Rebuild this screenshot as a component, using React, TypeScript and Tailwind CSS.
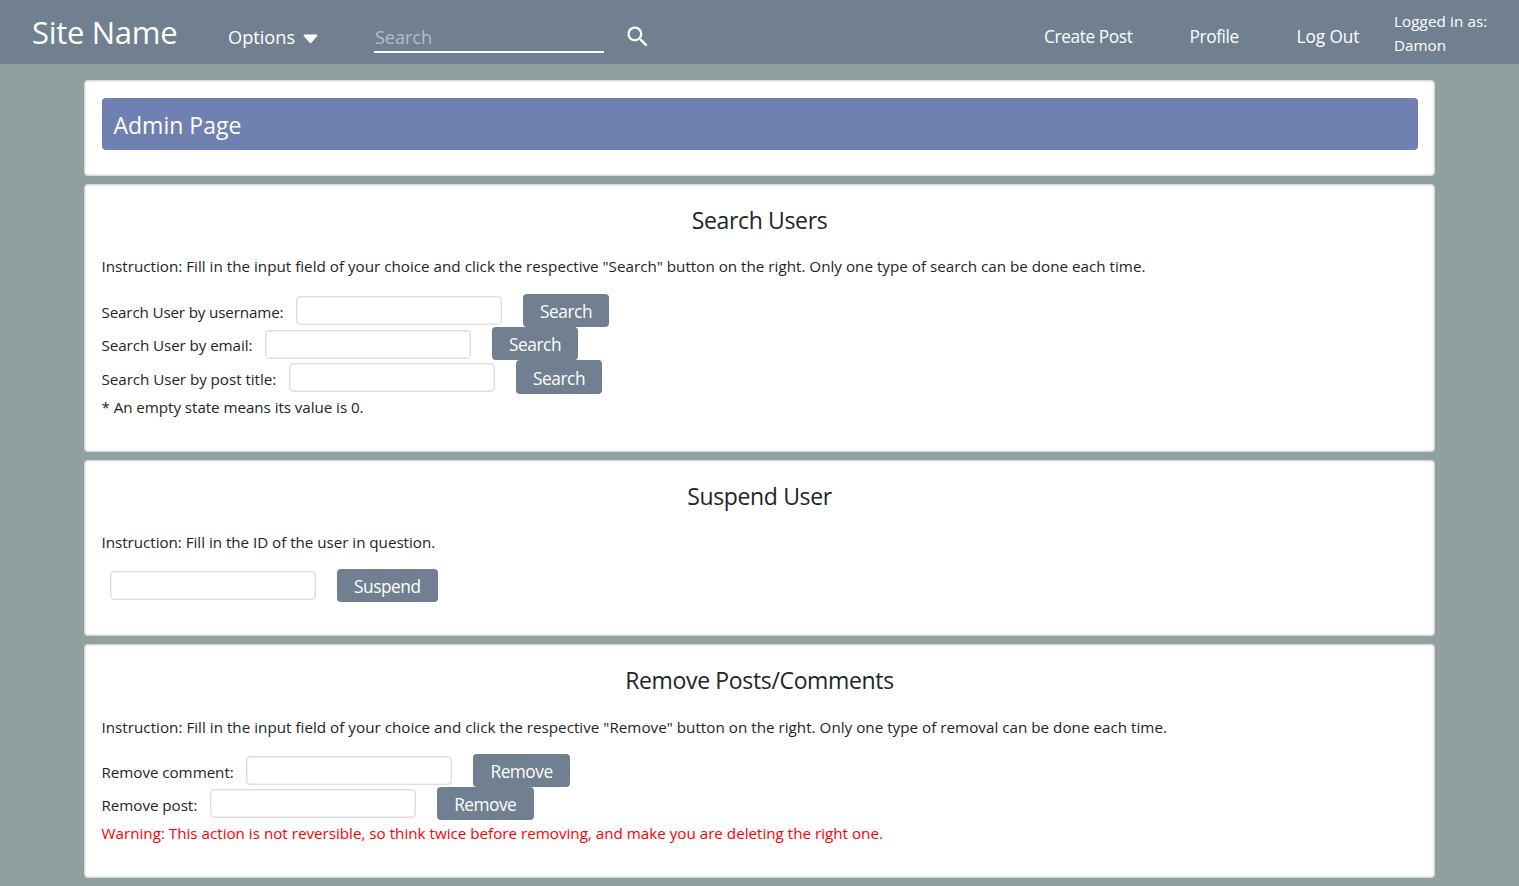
import { MdSearch } from 'react-icons/md';

type FieldRowProps = {
  label?: string;
  labelClass?: string;
  action: string;
  buttonClass: string;
};

function FieldRow({ label, labelClass, action, buttonClass }: FieldRowProps) {
  return (
    <div className="flex h-[33.3px] items-center">
      {label && (
        <label className={`mt-[3px] shrink-0 whitespace-nowrap ${labelClass}`}>{label}</label>
      )}
      <input
        aria-label={label ?? action}
        className="mt-[0.6px] h-[29px] w-[206px] shrink-0 rounded-[4px] border border-[#dedede] bg-white px-2 shadow-[inset_0_0_0_1px_#f0f0f0] outline-none"
      />
      <button
        className={`h-full shrink-0 rounded-[4px] bg-[#708090] pt-[2px] text-[17.3px] leading-[31px] text-white ${buttonClass}`}
      >
        {action}
      </button>
    </div>
  );
}

const card =
  'mx-auto w-[1351px] rounded-[4px] border border-[#d8dbdb] bg-white px-[16.5px] shadow-[inset_0_0_0_1px_#ebebeb]';
const heading =
  'text-center text-[23px] leading-7 tracking-[-0.35px]';

export default function App() {
  return (
    <div className="h-[886px] w-full overflow-hidden bg-[#909f9f] font-['Open_Sans','Noto_Sans',sans-serif] text-[15.2px] leading-6 text-[#212529]">
      <header className="flex h-16 items-start bg-[#708090] text-white">
        <h1 className="ml-8 mt-3 w-[196px] whitespace-nowrap text-[31px] leading-10 tracking-[-0.3px]">
          Site Name
        </h1>
        <div className="mt-[25px] flex w-[146px] items-center whitespace-nowrap text-[18.2px] leading-6">
          <span className="w-[75px]">Options</span>
          <svg width="15" height="10" viewBox="0 0 15 10" fill="white" className="mt-[3px]">
            <path d="M1.3 0.5H13.7Q15 0.8 14.2 2L8.6 8.6Q7.5 9.7 6.4 8.6L0.8 2Q0 0.8 1.3 0.5Z" />
          </svg>
        </div>
        <input
          placeholder="Search"
          className="mt-[22px] h-[31px] w-[230px] border-b-2 border-white bg-transparent pl-px text-[18.2px] tracking-[-0.1px] outline-none placeholder:text-[#b4bdc6]"
        />
        <MdSearch className="ml-5 mt-[23px] size-[27.5px]" />
        <nav className="ml-auto mt-[25px] flex whitespace-nowrap text-[17.3px] leading-6">
          <a className="w-[145.5px] tracking-[-0.4px]">Create Post</a>
          <a className="w-[107px] tracking-[-0.4px]">Profile</a>
          <a className="w-[97.5px] tracking-[-0.1px]">Log Out</a>
        </nav>
        <div className="mt-[9px] w-[125px] whitespace-nowrap text-[15.2px] leading-6">
          <span className="tracking-[0.1px]">Logged in as:</span>
          <br />
          Damon
        </div>
      </header>

      <main className="flex flex-col pt-4">
        <section className={`${card} h-24 pt-[17px]`}>
          <h2 className="h-[52px] rounded-[4px] bg-[#7080b0] pl-3 text-[23px] leading-[54px] text-white">
            Admin Page
          </h2>
        </section>

        <section className={`${card} mt-2 h-[267.5px] pt-[21px]`}>
          <h2 className={heading}>Search Users</h2>
          <p className="mt-5 whitespace-nowrap tracking-[0.01px]">
            Instruction: Fill in the input field of your choice and click the respective "Search" button on the right. Only one type of search can be done each time.
          </p>
          <div className="mt-[15.8px]">
            <FieldRow label="Search User by username:" labelClass="w-[194px] tracking-[-0.15px]" action="Search" buttonClass="ml-[21.3px] w-[86.5px] tracking-[-0.45px]" />
            <FieldRow label="Search User by email:" labelClass="w-[163px] tracking-[-0.08px]" action="Search" buttonClass="ml-[21.3px] w-[86.5px] tracking-[-0.45px]" />
            <FieldRow label="Search User by post title:" labelClass="w-[187px] tracking-[-0.05px]" action="Search" buttonClass="ml-[21.3px] w-[86.5px] tracking-[-0.45px]" />
          </div>
          <p className="mt-[1.2px] tracking-[-0.06px]">* An empty state means its value is 0.</p>
        </section>

        <section className={`${card} mt-[8px] h-[176.5px] pt-[21px]`}>
          <h2 className={heading}>Suspend User</h2>
          <p className="mt-5 tracking-[-0.03px]">Instruction: Fill in the ID of the user in question.</p>
          <div className="mt-[15.2px] pl-2">
            <FieldRow action="Suspend" buttonClass="ml-[21.3px] w-[101px] tracking-[-0.45px]" />
          </div>
        </section>

        <section className={`${card} mt-[8px] h-[234px] pt-[21px]`}>
          <h2 className={heading}>Remove Posts/Comments</h2>
          <p className="mt-[20.6px] whitespace-nowrap tracking-[0.02px]">
            Instruction: Fill in the input field of your choice and click the respective "Remove" button on the right. Only one type of removal can be done each time.
          </p>
          <div className="mt-[15px]">
            <FieldRow label="Remove comment:" labelClass="w-[144px] tracking-[-0.05px]" action="Remove" buttonClass="ml-[21.3px] w-[97.5px] tracking-[-0.5px]" />
            <FieldRow label="Remove post:" labelClass="w-[108px] tracking-[-0.05px]" action="Remove" buttonClass="ml-[21px] w-[97.5px] tracking-[-0.5px]" />
          </div>
          <p className="mt-[0.5px] text-[#ff0000]">
            Warning: This action is not reversible, so think twice before removing, and make you are deleting the right one.
          </p>
        </section>
      </main>
    </div>
  );
}
